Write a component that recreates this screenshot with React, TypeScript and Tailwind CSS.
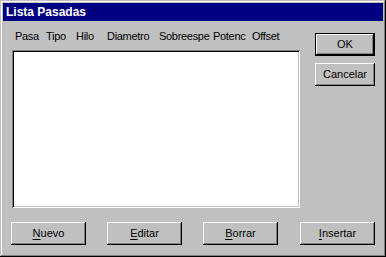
import React from "react";

const btn =
  "flex items-center justify-center bg-[#c0c0c0] text-black shadow-[inset_-1px_-1px_0_#000,inset_1px_1px_0_#fff,inset_-2px_-2px_0_#808080]";

function Mn({ c, rest }: { c: string; rest: string }) {
  return (
    <span>
      <span className="underline underline-offset-[2px]">{c}</span>
      {rest}
    </span>
  );
}

export default function App() {
  const cols: [string, number][] = [
    ["Pasa", 31],
    ["Tipo", 30],
    ["Hilo", 31],
    ["Diametro", 52],
    ["Sobreespe", 54],
    ["Potenc", 39],
    ["Offset", 36],
  ];
  return (
    <div
      className="w-[386px] h-[257px] bg-[#c0c0c0] p-[3px] flex flex-col shadow-[inset_-1px_-1px_0_#000,inset_1px_1px_0_#c0c0c0,inset_-2px_-2px_0_#808080,inset_2px_2px_0_#fff] text-[11px] leading-[13px] text-black"
      style={{ fontFamily: '"Liberation Sans", Arial, sans-serif' }}
    >
      <div className="h-[18px] bg-[#000080] flex items-center pl-[3px]">
        <span className="text-white font-bold text-[12px] leading-[14px]">Lista Pasadas</span>
      </div>
      <div className="flex-1 flex flex-col">
        <div className="flex">
          <div className="pl-[9px] flex flex-col">
            <div className="flex h-[29px] pt-[9px] pl-[3px] tracking-[-0.3px]">
              {cols.map(([t, w]) => (
                <div key={t} className="whitespace-nowrap" style={{ width: w }}>
                  {t}
                </div>
              ))}
            </div>
            <div className="w-[288px] h-[158px] bg-white shadow-[inset_1px_1px_0_#808080,inset_-1px_-1px_0_#fff,inset_2px_2px_0_#000,inset_-2px_-2px_0_#c0c0c0]" />
          </div>
          <div className="pl-[15px] pt-[12px] flex flex-col gap-[7px]">
            <div className="w-[60px] h-[23px] bg-black p-[1px]">
              <div className={btn + " w-full h-full"}>OK</div>
            </div>
            <div className={btn + " w-[60px] h-[23px]"}>Cancelar</div>
          </div>
        </div>
        <div className="flex pl-[8px] gap-[21px] mt-[14px]">
          <div className={btn + " w-[75px] h-[23px]"}>
            <Mn c="N" rest="uevo" />
          </div>
          <div className={btn + " w-[75px] h-[23px]"}>
            <Mn c="E" rest="ditar" />
          </div>
          <div className={btn + " w-[75px] h-[23px]"}>
            <Mn c="B" rest="orrar" />
          </div>
          <div className={btn + " w-[75px] h-[23px] ml-[1px]"}>
            <Mn c="I" rest="nsertar" />
          </div>
        </div>
      </div>
    </div>
  );
}
